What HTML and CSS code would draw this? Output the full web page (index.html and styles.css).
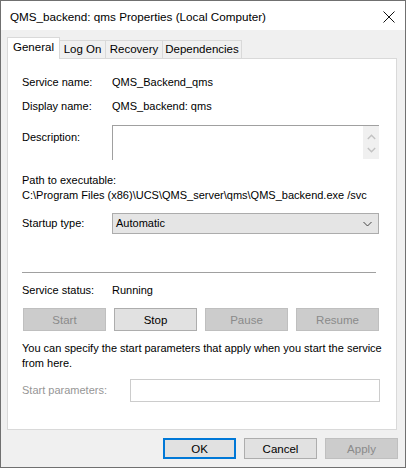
FILE: index.html
```html
<!DOCTYPE html>
<html>
<head>
<meta charset="utf-8">
<link rel="stylesheet" href="styles.css">
</head>
<body>
<div class="window">
  <div class="titlebar">
    <span class="title">QMS_backend: qms Properties (Local Computer)</span>
    <svg class="close" width="12" height="12" viewBox="0 0 12 12"><path d="M0.5 0.5 L11.5 11.5 M11.5 0.5 L0.5 11.5" stroke="#111" stroke-width="1" fill="none"/></svg>
  </div>
  <div class="body">
    <div class="tabs">
      <div class="tab active t-general">General</div>
      <div class="tab t-logon">Log On</div>
      <div class="tab t-recovery">Recovery</div>
      <div class="tab t-deps">Dependencies</div>
    </div>
    <div class="panel">
      <div class="row r-service"><span class="label">Service name:</span><span class="value">QMS_Backend_qms</span></div>
      <div class="row r-display"><span class="label">Display name:</span><span class="value">QMS_backend: qms</span></div>
      <div class="row r-desc">
        <span class="label desc-label">Description:</span>
        <div class="descbox">
          <div class="scroll">
            <svg width="9" height="6" viewBox="0 0 9 6"><path d="M0.8 5 L4.5 1.3 L8.2 5" stroke="#c2c2c2" stroke-width="1.4" fill="none"/></svg>
            <svg width="9" height="6" viewBox="0 0 9 6"><path d="M0.8 1 L4.5 4.7 L8.2 1" stroke="#c2c2c2" stroke-width="1.4" fill="none"/></svg>
          </div>
        </div>
      </div>
      <div class="path-label">Path to executable:</div>
      <div class="path">C:\Program Files (x86)\UCS\QMS_server\qms\QMS_backend.exe /svc</div>
      <div class="row r-startup">
        <span class="label">Startup type:</span>
        <div class="select"><span>Automatic</span>
          <svg width="9" height="6" viewBox="0 0 9 6"><path d="M0.5 1 L4.5 5 L8.5 1" stroke="#444" stroke-width="1" fill="none"/></svg>
        </div>
      </div>
      <div class="sep"></div>
      <div class="row r-status"><span class="label">Service status:</span><span class="value">Running</span></div>
      <div class="svc-buttons">
        <button class="btn disabled">Start</button>
        <button class="btn">Stop</button>
        <button class="btn disabled">Pause</button>
        <button class="btn disabled">Resume</button>
      </div>
      <p class="note">You can specify the start parameters that apply when you start the service from here.</p>
      <div class="row r-params">
        <span class="label params-label">Start parameters:</span>
        <div class="input"></div>
      </div>
    </div>
    <div class="footer">
      <button class="btn fbtn default">OK</button>
      <button class="btn fbtn">Cancel</button>
      <button class="btn fbtn disabled">Apply</button>
    </div>
  </div>
</div>
</body>
</html>
```

FILE: styles.css
```css
* { box-sizing: border-box; }
html, body { margin: 0; padding: 0; background: #f0f0f0; }
body {
  font-family: "Liberation Sans", Arial, sans-serif;
  font-size: 11px;
  color: #000;
}
.window {
  width: 406px;
  height: 468px;
  border: 1px solid #707070;
  background: #f0f0f0;
  display: flex;
  flex-direction: column;
}
.titlebar {
  height: 29px;
  background: #fff;
  display: flex;
  align-items: center;
  padding-left: 9px;
  padding-right: 10px;
  justify-content: space-between;
}
.title {
  font-size: 11.7px;
  color: #000;
  padding-top: 2px;
}
.close { margin-right: 0; margin-top: 2px; }
.body {
  flex: 1;
  padding-top: 7px;
  display: flex;
  flex-direction: column;
}
.tabs {
  display: flex;
  align-items: flex-end;
  margin-left: 6px;
  height: 21px;
}
.tab {
  height: 18px;
  border: 1px solid #d9d9d9;
  border-bottom: none;
  background: #f0f0f0;
  text-align: center;
  line-height: 17px;
  font-size: 11.5px;
  margin-left: -1px;
}
.tab.active {
  height: 22px;
  background: #fff;
  margin-bottom: -1px;
  position: relative;
  z-index: 1;
  line-height: 19px;
  margin-left: 0;
}
.t-general { width: 53px; }
.t-logon { width: 47px; }
.t-recovery { width: 58px; }
.t-deps { width: 80px; }
.panel {
  margin-left: 6px;
  width: 390px;
  height: 372px;
  border: 1px solid #d9d9d9;
  background: #fff;
  padding: 16px 0 0 14px;
}
.row {
  display: flex;
  align-items: center;
  line-height: 15px;
}
.label { width: 90px; flex: none; }
.r-display { margin-top: 9px; }
.r-desc { margin-top: 11px; align-items: flex-start; }
.desc-label { margin-top: 5px; }
.descbox {
  width: 267px;
  height: 35px;
  border-top: 1px solid #a0a0a0;
  border-left: 1px solid #a0a0a0;
  display: flex;
  justify-content: flex-end;
}
.scroll {
  width: 16px;
  height: 33px;
  background: #f0f0f0;
  display: flex;
  flex-direction: column;
  align-items: center;
  justify-content: space-around;
  padding: 5px 0 3px;
}
.scroll svg { display: block; }
.path-label { margin-top: 13px; line-height: 15px; }
.path { line-height: 15px; }
.r-startup { margin-top: 10px; }
.select {
  width: 267px;
  height: 21px;
  background: #e5e5e5;
  border: 1px solid #acacac;
  display: flex;
  align-items: center;
  justify-content: space-between;
  padding: 0 6px 0 3px;
}
.select svg { display: block; }
.sep {
  margin-top: 38px;
  width: 354px;
  height: 1px;
  background: #a0a0a0;
}
.r-status { margin-top: 10px; }
.svc-buttons {
  margin-top: 10px;
  margin-left: 1px;
  width: 356px;
  display: grid;
  grid-template-columns: repeat(4, 1fr);
  column-gap: 8px;
}
.btn {
  font-family: "Liberation Sans", Arial, sans-serif;
  font-size: 11.5px;
  height: 23px;
  background: #e1e1e1;
  border: 1px solid #adadad;
  color: #000;
  padding: 0;
  margin: 0;
}
.btn.disabled {
  background: #cccccc;
  border-color: #bfbfbf;
  color: #8a8a8a;
}
.note {
  margin: 10px 0 0 0;
  width: 360px;
  line-height: 15px;
}
.r-params { margin-top: 8px; }
.params-label { width: 108px; color: #969696; }
.input {
  width: 250px;
  height: 23px;
  border: 1px solid #cccccc;
  background: #fff;
}
.footer {
  margin-top: 8px;
  display: flex;
  justify-content: flex-end;
  gap: 8px;
  padding-right: 7px;
}
.fbtn { width: 73px; height: 21px; }
.btn.default { border: 2px solid #0078d7; }
```
